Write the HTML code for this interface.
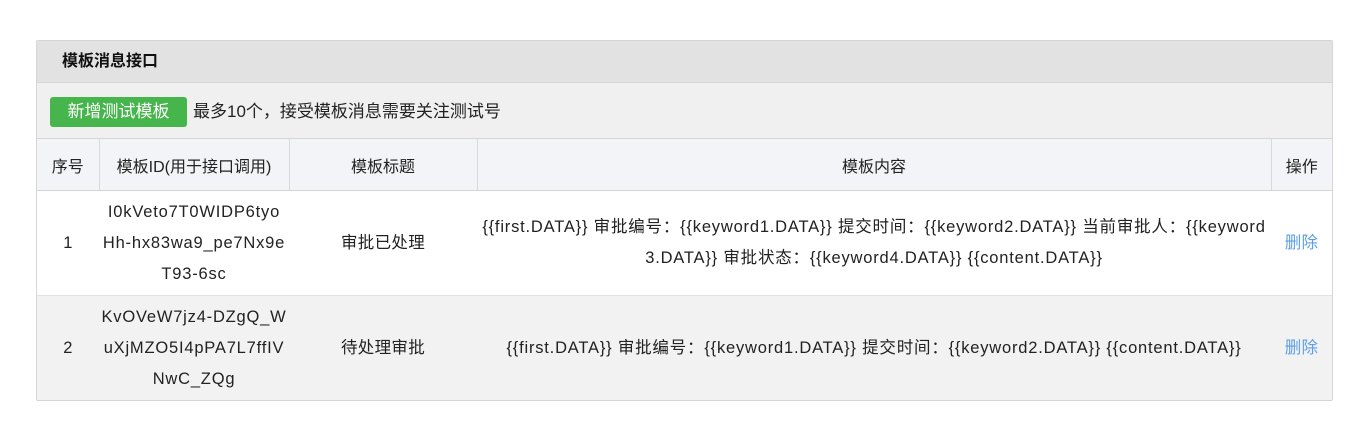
<!DOCTYPE html>
<html><head><meta charset="utf-8"><style>
body{margin:0;background:#fff;font-family:"Liberation Sans","Noto Sans CJK SC",sans-serif;font-size:16px;color:#222;}
.p{position:absolute;left:36px;top:40px;width:1295px;border:1px solid #d6d6d6;border-radius:2px;overflow:hidden;}
.h{height:41px;background:#e2e2e2;border-bottom:1px solid #d6d6d6;font-weight:bold;line-height:41px;padding-left:25px;font-size:16px;color:#111}
.t{height:55px;background:#f0f0f0;position:relative;border-bottom:1px solid #d6d6d6}
.btn{position:absolute;left:13px;top:14px;width:137px;height:30px;background:#46b54b;color:#fff;border-radius:3px;text-align:center;line-height:30px;font-size:17px}
.tt{position:absolute;left:156px;top:14px;line-height:30px;font-size:17px}
table{border-collapse:collapse;width:100%;table-layout:fixed}
th{height:51px;background:#f3f4f7;font-weight:normal;border-right:1px solid #d9d9d9;border-bottom:1px solid #d6d6d6;padding:0}
th:last-child,td:last-child{border-right:none}
td{text-align:center;line-height:31px;padding:0;white-space:nowrap;font-size:16.5px;letter-spacing:0.8px}
td.n{letter-spacing:0.3px}
tr.r1 td{height:104px;background:#fff;border-bottom:1px solid #e2e2e2}
tr.r2 td{height:104px;background:#f2f2f2}
a{color:#5b9ee8;text-decoration:none}
</style></head><body>
<div class="p">
<div class="h">模板消息接口</div>
<div class="t"><div class="btn">新增测试模板</div><div class="tt">最多10个，接受模板消息需要关注测试号</div></div>
<table><colgroup><col style="width:62px"><col style="width:190px"><col style="width:188px"><col style="width:794px"><col style="width:61px"></colgroup>
<tr><th>序号</th><th>模板ID(用于接口调用)</th><th>模板标题</th><th>模板内容</th><th>操作</th></tr>
<tr class="r1"><td class="n">1</td><td>I0kVeto7T0WIDP6tyo<br>Hh-hx83wa9_pe7Nx9e<br>T93-6sc</td><td class="n">审批已处理</td><td>{{first.DATA}} 审批编号：{{keyword1.DATA}} 提交时间：{{keyword2.DATA}} 当前审批人：{{keyword<br>3.DATA}} 审批状态：{{keyword4.DATA}} {{content.DATA}}</td><td class="n"><a>删除</a></td></tr>
<tr class="r2"><td class="n">2</td><td>KvOVeW7jz4-DZgQ_W<br>uXjMZO5I4pPA7L7ffIV<br>NwC_ZQg</td><td class="n">待处理审批</td><td>{{first.DATA}} 审批编号：{{keyword1.DATA}} 提交时间：{{keyword2.DATA}} {{content.DATA}}</td><td class="n"><a>删除</a></td></tr>
</table></div>
</body></html>
